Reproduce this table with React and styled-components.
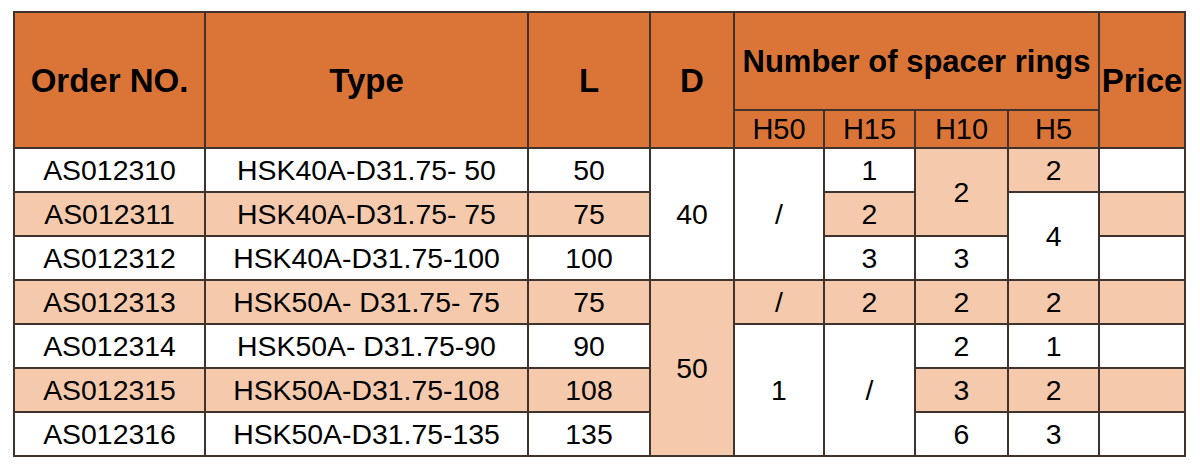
import React from 'react';
import styled, { createGlobalStyle } from 'styled-components';

const GlobalStyle = createGlobalStyle`
  html, body {
    margin: 0;
    padding: 0;
    background: #fff;
  }
  body {
    font-family: 'Liberation Sans', Arial, sans-serif;
    color: #000;
  }
`;

const orange = '#db7537';
const peach = '#f5c9ac';
const line = '#40332d';

const Page = styled.div`
  width: 1200px;
  height: 468px;
  padding: 11px 0 0 13px;
  box-sizing: border-box;
  background: #fff;
`;

const Table = styled.table`
  border-collapse: collapse;
  table-layout: fixed;
  width: 1173px;
`;

const HeadCell = styled.th`
  background: ${orange};
  border: 2px solid ${line};
  font-size: ${(p) => p.$size || '33px'};
  font-weight: ${(p) => (p.$small ? 400 : 700)};
  text-align: center;
  vertical-align: middle;
  padding: 0;
  white-space: nowrap;
  height: ${(p) => p.$h || 'auto'};
  line-height: 1;
`;

const Row = styled.tr`
  height: 44px;
`;

const Cell = styled.td`
  background: ${(p) => (p.$tint ? peach : '#fff')};
  border: 2px solid ${line};
  font-size: 28.4px;
  text-align: center;
  vertical-align: middle;
  padding: 0;
  white-space: nowrap;
  line-height: 1;
`;

const widths = [191, 323, 122, 84, 90, 91, 93, 91, 86];

// each cell: [text, tint, rowSpan]
const rows = [
  [
    ['AS012310', 0], ['HSK40A-D31.75- 50', 0], ['50', 0], ['40', 0, 3], ['/', 0, 3],
    ['1', 0], ['2', 1, 2], ['2', 1], ['', 0],
  ],
  [
    ['AS012311', 1], ['HSK40A-D31.75- 75', 1], ['75', 1], ['2', 1], ['4', 0, 2], ['', 1],
  ],
  [
    ['AS012312', 0], ['HSK40A-D31.75-100', 0], ['100', 0], ['3', 0], ['3', 0], ['', 0],
  ],
  [
    ['AS012313', 1], ['HSK50A- D31.75- 75', 1], ['75', 1], ['50', 1, 4], ['/', 1],
    ['2', 1], ['2', 1], ['2', 1], ['', 1],
  ],
  [
    ['AS012314', 0], ['HSK50A- D31.75-90', 0], ['90', 0], ['1', 0, 3], ['/', 0, 3],
    ['2', 0], ['1', 0], ['', 0],
  ],
  [
    ['AS012315', 1], ['HSK50A-D31.75-108', 1], ['108', 1], ['3', 1], ['2', 1], ['', 1],
  ],
  [
    ['AS012316', 0], ['HSK50A-D31.75-135', 0], ['135', 0], ['6', 0], ['3', 0], ['', 0],
  ],
];

export default function App() {
  return (
    <>
      <GlobalStyle />
      <Page>
        <Table>
          <colgroup>
            {widths.map((w, i) => (
              <col key={i} style={{ width: w }} />
            ))}
          </colgroup>
          <thead>
            <tr>
              <HeadCell rowSpan={2}>Order NO.</HeadCell>
              <HeadCell rowSpan={2}>Type</HeadCell>
              <HeadCell rowSpan={2}>L</HeadCell>
              <HeadCell rowSpan={2}>D</HeadCell>
              <HeadCell colSpan={4} $h="96px" $size="31px">Number of spacer rings</HeadCell>
              <HeadCell rowSpan={2}>Price</HeadCell>
            </tr>
            <tr>
              {['H50', 'H15', 'H10', 'H5'].map((h) => (
                <HeadCell key={h} $small $size="29px" $h="36px">{h}</HeadCell>
              ))}
            </tr>
          </thead>
          <tbody>
            {rows.map((r, i) => (
              <Row key={i}>
                {r.map(([text, tint, span], j) => (
                  <Cell key={j} $tint={tint} rowSpan={span || 1}>
                    {text}
                  </Cell>
                ))}
              </Row>
            ))}
          </tbody>
        </Table>
      </Page>
    </>
  );
}
